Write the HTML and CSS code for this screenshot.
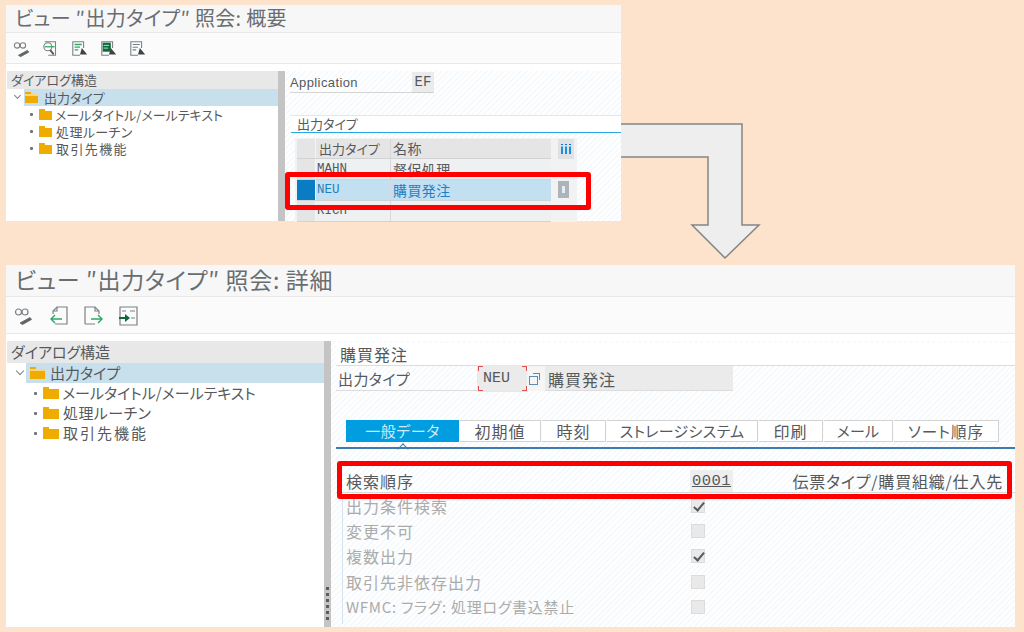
FILE: index.html
```html
<!DOCTYPE html>
<html lang="ja">

<head>
    <meta charset="UTF-8" />
    <title>出力タイプ 照会</title>
    <link rel="stylesheet" href="styles.css">
</head>

<body>
    <!-- 概要 -->
    <div class="window window-small">
        <div class="title">ビュー ″出力タイプ″ 照会: 概要</div>
        <div class="toolbar">
            <svg viewBox="0 0 20 20"><circle cx="4.5" cy="6" r="3" class="ln" /><circle cx="11" cy="6" r="3" class="ln" /><path d="M7.5 6h0.5M6 17l10-5.500 1.500 2-9 5z" class="pen" /></svg>
            <svg viewBox="0 0 20 20"><path d="M3 2h12v15H7" class="ln" /><circle cx="6.500" cy="7.500" r="4.500" class="ln" /><path d="M3 7.500h11" class="gr" /><path d="M9 11l4 5" class="dk" /></svg>
            <svg viewBox="0 0 20 20"><path d="M10 17H2V2h12v7" class="ln" /><path d="M4 5h8M4 8h6M4 11h4" class="gr" /><path d="M12 9l6 7h-8z" class="tri" /></svg>
            <svg viewBox="0 0 20 20"><path d="M10 17H2V2h12v7" class="ln" /><path d="M3 3h9v10H3z" class="blk" /><path d="M4 6h6M4 9h5" class="wh" /><path d="M12 9l6 7h-8z" class="tri" /></svg>
            <svg viewBox="0 0 20 20"><path d="M10 17H2V2h12v7" class="ln" /><path d="M4 5h8M4 8h6M4 11h4" class="ln" /><path d="M12 9l6 7h-8z" class="tri" /></svg>
        </div>
        <div class="split">
            <div class="tree">
                <div class="tree-head">ダイアログ構造</div>
                <div class="tree-row root"><span class="chevron"></span><span class="folder open"></span><span class="root-label">出力タイプ</span></div>
                <div class="tree-row child"><span class="dot"></span><span class="folder"></span>メールタイトル/メールテキスト</div>
                <div class="tree-row child"><span class="dot"></span><span class="folder"></span><span class="kana-gap">処理ルーチン</span></div>
                <div class="tree-row child"><span class="dot"></span><span class="folder"></span><span class="kana-gap kanji">取引先機能</span></div>
            </div>
            <div class="sash"></div>
            <div class="pane">
                <div class="app-row">
                    <span class="app-label">Application</span>
                    <span class="app-value">EF</span>
                </div>
                <div class="group-title">出力タイプ</div>
                <div class="grid-wrap">
                    <div class="grid">
                        <div class="g-row g-head"><span class="g-sel"></span><span class="g-a">出力タイプ</span><span class="g-b">名称</span></div>
                        <div class="g-row"><span class="g-sel"></span><span class="g-a mono">MAHN</span><span class="g-b">督促処理</span></div>
                        <div class="g-row g-active"><span class="g-sel"></span><span class="g-a mono">NEU</span><span class="g-b">購買発注</span></div>
                        <div class="g-row"><span class="g-sel"></span><span class="g-a mono">RICH</span><span class="g-b"></span></div>
                    </div>
                    <div class="grid-side">
                        <div class="grid-config">
                            <svg viewBox="0 0 12 12"><path d="M1 1h2v1H1zM5 1h2v1H5zM9 1h2v1H9z" fill="#0a6ed1" /><path d="M1 3.500h2V11H1zM5 3.500h2V11H5zM9 3.500h2V11H9z" fill="#1d8fd8" /></svg>
                        </div>
                        <div class="grid-knob"><span></span></div>
                    </div>
                </div>
            </div>
        </div>
        <div class="mark mark-one"></div>
    </div>

    <!-- 矢印 -->
    <svg class="arrow" viewBox="0 0 150 150">
        <path d="M1 4H122V105H139L105 138L72 105H88V37H1" fill="#eeeeee" stroke="#858585" stroke-width="1.500" />
    </svg>

    <!-- 詳細 -->
    <div class="window window-large">
        <div class="title">ビュー ″出力タイプ″ 照会: 詳細</div>
        <div class="toolbar">
            <svg viewBox="0 0 20 20"><circle cx="4.500" cy="6" r="3" class="ln" /><circle cx="11" cy="6" r="3" class="ln" /><path d="M7.500 6h0.500M6 17l10-5.500 1.500 2-9 5z" class="pen" /></svg>
            <svg viewBox="0 0 20 20"><path d="M4 8V5l4-4h10v17H6" class="ln" /><path d="M4 5h4V1" class="ln" /><path d="M13 13H2M6 9l-4 4 4 4" class="gr" /></svg>
            <svg viewBox="0 0 20 20"><path d="M2 18V1h10l4 4v3M2 18h10" class="ln" /><path d="M12 1v4h4" class="ln" /><path d="M8 13h11M15 9l4 4-4 4" class="gr" /></svg>
            <svg viewBox="0 0 20 20"><path d="M2 1h17v18H2z" class="ln" /><path d="M4 5h4M12 5h5M13 12h4" class="ln" /><path d="M1 12h7" class="blk-ln" /><path d="M7 8l5 4-5 4z" class="blk" /></svg>
        </div>
        <div class="split">
            <div class="tree">
                <div class="tree-head">ダイアログ構造</div>
                <div class="tree-row root"><span class="chevron"></span><span class="folder open"></span><span class="root-label">出力タイプ</span></div>
                <div class="tree-row child"><span class="dot"></span><span class="folder"></span>メールタイトル/メールテキスト</div>
                <div class="tree-row child"><span class="dot"></span><span class="folder"></span><span class="kana-gap">処理ルーチン</span></div>
                <div class="tree-row child"><span class="dot"></span><span class="folder"></span><span class="kana-gap kanji">取引先機能</span></div>
            </div>
            <div class="sash">
                <span class="sash-dots"></span>
            </div>
            <div class="pane">
                <div class="heading">購買発注</div>
                <div class="key-row">
                    <span class="key-label">出力タイプ</span>
                    <span class="key-field">NEU</span>
                    <span class="key-help"></span>
                    <span class="key-text">購買発注</span>
                </div>
                <div class="tabs">
                    <span class="tab tab-on t1">一般データ</span>
                    <span class="tab t2">初期値</span>
                    <span class="tab t3">時刻</span>
                    <span class="tab t4">ストレージシステム</span>
                    <span class="tab t5">印刷</span>
                    <span class="tab t6">メール</span>
                    <span class="tab t7">ソート順序</span>
                </div>
                <div class="tab-body">
                    <div class="form-row form-main">
                        <span class="form-label">検索順序</span>
                        <span class="form-value">0001</span>
                        <span class="form-note">伝票タイプ/購買組織/仕入先</span>
                    </div>
                    <div class="form-row"><span class="form-label off">出力条件検索</span><span class="check on"></span></div>
                    <div class="form-row"><span class="form-label off">変更不可</span><span class="check"></span></div>
                    <div class="form-row"><span class="form-label off">複数出力</span><span class="check on"></span></div>
                    <div class="form-row"><span class="form-label off">取引先非依存出力</span><span class="check"></span></div>
                    <div class="form-row"><span class="form-label off small">WFMC: フラグ: 処理ログ書込禁止</span><span class="check"></span></div>
                </div>
            </div>
        </div>
        <div class="mark mark-two"></div>
    </div>
</body>

</html>
```

FILE: styles.css
```css
html,
body {
    margin: 0;
    padding: 0;
    width: 1024px;
    height: 632px;
    overflow: hidden;
    background-color: #fde3cb;
    font-family: 'Noto Sans CJK JP', 'Noto Sans', sans-serif;
    font-feature-settings: "palt";
    color: #55595c;
}

/* 画面キャプチャ */
.window {
    position: absolute;
    display: flex;
    flex-direction: column;
    background-color: #ffffff;
    overflow: visible;
}

.window-small {
    left: 6px;
    top: 5px;
    width: 615px;
    height: 216px;
    --title-h: 28px;
    --tool-h: 31px;
    --tree-w: 271px;
    --head-h: 18px;
    --row-h: 17px;
    --tree-font: 13px;
    --kanji-size: 13px;
    --kanji-gap: 1.400px;
}

.window-large {
    left: 6px;
    top: 265px;
    width: 1009px;
    height: 362px;
    --title-h: 32px;
    --tool-h: 37px;
    --tree-w: 317px;
    --head-h: 22px;
    --row-h: 20px;
    --tree-font: 15px;
    --kanji-size: 15px;
    --kanji-gap: 2px;
}

.title {
    height: var(--title-h);
    padding-left: 9px;
    background-color: #f7f7f7;
    border-bottom: 1px solid #e8e8e8;
    box-sizing: border-box;
    white-space: nowrap;
    color: #696d70;
}

.window-small .title {
    font-size: 20px;
    line-height: 26px;
    letter-spacing: 0.300px;
}

.window-large .title {
    font-size: 23px;
    line-height: 28px;
    letter-spacing: 0.650px;
}

.toolbar {
    height: var(--tool-h);
    display: flex;
    align-items: center;
    background-color: #fbfbfb;
    border-bottom: 1px solid #e8e8e8;
    box-sizing: border-box;
    padding: 2px 0 0 7px;
    gap: 11px;
}

.toolbar svg {
    width: 18px;
    height: 18px;
    fill: none;
}

.window-large .toolbar svg {
    width: 20px;
    height: 20px;
}

.window-large .toolbar {
    padding-left: 8px;
    gap: 14.500px;
}

.ln {
    fill: none;
    stroke: #7b8186;
    stroke-width: 1.2;
}

.gr {
    fill: none;
    stroke: #2fa865;
    stroke-width: 1.4;
}

.wh {
    fill: none;
    stroke: #cfe8da;
    stroke-width: 1;
}

.dk {
    fill: none;
    stroke: #555a5e;
    stroke-width: 2;
}

.pen {
    fill: #5c5f62;
    stroke: #6f7579;
}

.tri {
    fill: #3d4347;
}

.blk {
    fill: #0b6b3a;
}

.blk-ln {
    fill: none;
    stroke: #0b6b3a;
    stroke-width: 2;
}

.split {
    flex: 1;
    display: flex;
    min-height: 0;
    margin-top: 7px;
}

/* ツリー */
.tree {
    width: var(--tree-w);
    margin-left: 1px;
    flex-shrink: 0;
    font-size: var(--tree-font);
    color: #55595c;
}

.tree-head {
    height: var(--head-h);
    line-height: var(--head-h);
    padding-left: 4px;
    background-color: #e8e8e8;
    white-space: nowrap;
}

.tree-row {
    height: var(--row-h);
    line-height: var(--row-h);
    display: flex;
    align-items: center;
    white-space: nowrap;
}

.kana-gap {
    margin-left: 1px;
    letter-spacing: 0.400px;
}

.kanji {
    font-size: var(--kanji-size);
    letter-spacing: var(--kanji-gap);
}

.root {
    position: relative;
    padding-left: 18px;
    background: linear-gradient(#c8dfec, #c8dfec) no-repeat 17px 0;
}

.child {
    padding-left: 23px;
}

.window-large .root {
    padding-left: 23px;
    background-position: 19px 0;
}

.window-large .child {
    padding-left: 27px;
}

.root-label {
    margin-left: 3px;
}

.window-large .root-label {
    margin-left: 2px;
}

.chevron {
    position: absolute;
    left: 8px;
    top: 4px;
    width: 4px;
    height: 4px;
    border-right: 1px solid #7b8286;
    border-bottom: 1px solid #7b8286;
    transform: rotate(45deg);
}

.window-large .chevron {
    left: 10px;
    top: 5px;
    width: 5px;
    height: 5px;
}

.dot {
    width: 3px;
    height: 3px;
    margin-right: 6px;
    background-color: #6f7579;
    border-radius: 1px;
}

.folder {
    position: relative;
    width: 13px;
    height: 9px;
    margin-top: 1px;
    margin-right: 3px;
    background-color: #f0ab00;
    flex-shrink: 0;
}

.folder::before {
    content: "";
    position: absolute;
    left: 0;
    top: -2px;
    width: 6px;
    height: 2px;
    background-color: #f0ab00;
}

.window-large .folder {
    width: 16px;
    height: 10px;
}

.window-large .folder.open {
    width: 15px;
}

.folder.open {
    background: linear-gradient(180deg, #f9d67e 0 2px, #f0ab00 2px);
}

.sash {
    position: relative;
    width: 7px;
    flex-shrink: 0;
    background-color: #c4c4c4;
}

.sash-dots {
    position: absolute;
    left: 2px;
    bottom: 7px;
    width: 3px;
    height: 33px;
    background: repeating-linear-gradient(180deg, #5b5e60 0 3px, transparent 3px 6px);
}

/* 右ペイン */
.pane {
    flex: 1;
    min-width: 0;
    background: repeating-linear-gradient(135deg, #ffffff 0 2px, #f7fafc 2px 4px);
}

.app-row {
    display: flex;
    align-items: stretch;
    height: 21px;
    margin: 1px 0 0 5px;
}

.app-label {
    width: 122px;
    font-size: 13px;
    line-height: 21px;
    border-bottom: 1px solid #d5d5d5;
    font-family: 'Liberation Sans', sans-serif;
    letter-spacing: 0.400px;
}

.app-value {
    width: 22px;
    text-align: center;
    line-height: 21px;
    font-size: 14px;
    background-color: #ebebeb;
    border-bottom: 1px solid #cfcfcf;
    font-family: 'Liberation Mono', monospace;
}

.group-title {
    height: 16px;
    line-height: 15px;
    margin: 22px 0 0 6px;
    padding-left: 6px;
    font-size: 13px;
    background-color: #ffffff;
    border-top: 1px solid #e6e6e6;
    border-bottom: 1.500px solid #27a9e8;
}

.grid-wrap {
    display: flex;
    margin: 5px 0 0 10px;
    width: 282px;
    background-color: #f2f2f2;
    padding: 1px 2px 0;
    box-sizing: border-box;
    height: 84px;
    overflow: hidden;
}

.grid {
    width: 254px;
    flex-shrink: 0;
}

.g-row {
    display: flex;
    height: 21px;
    box-sizing: border-box;
    border-bottom: 1px solid #cfd3d6;
    font-size: 13px;
    line-height: 20px;
    background-color: #eef0f2;
}

.g-head {
    background-color: #e5e5e5;
    height: 20px;
    line-height: 19px;
}

.g-sel {
    width: 19px;
    flex-shrink: 0;
    background-color: #e5e5e5;
    border-right: 1px solid #f5f5f5;
    box-sizing: border-box;
}

.g-a {
    width: 75px;
    padding-left: 1px;
    box-sizing: border-box;
    border-right: 1px solid #d8d8d8;
}

.g-head .g-a {
    padding-left: 3px;
}

.g-b {
    flex: 1;
    padding-left: 2px;
    font-size: 14px;
    letter-spacing: 0.400px;
}

.mono {
    font-family: 'Liberation Mono', monospace;
    font-size: 12.500px;
    line-height: 21px;
}

.g-active {
    background-color: #c2e0f2;
    color: #1f7fc0;
}

.g-active .g-sel {
    background-color: #0a7cc4;
}

.grid-side {
    width: 24px;
    margin-left: 4px;
    background-color: #f2f2f2;
}

.grid-config {
    width: 16px;
    height: 20px;
    margin-left: 3px;
    background-color: #dfe2e4;
    display: flex;
    align-items: center;
    justify-content: center;
}

.grid-config svg {
    width: 12px;
    height: 12px;
}

.grid-knob {
    width: 11px;
    height: 17px;
    margin: 22px 0 0 3px;
    background-color: #aab4bd;
    display: flex;
    align-items: center;
    justify-content: center;
}

.grid-knob span {
    width: 3px;
    height: 7px;
    background-color: #e8ecef;
}

/* 詳細 */
.heading {
    height: 22px;
    line-height: 22px;
    margin: 2px 0 0 5px;
    padding-left: 4px;
    font-size: 16px;
    letter-spacing: 1px;
    border-bottom: 1.500px solid #dcdcdc;
    background-color: #ffffff;
}

.key-row {
    display: flex;
    height: 25px;
    margin-left: 5px;
    align-items: stretch;
    font-size: 15px;
    line-height: 26px;
}

.key-label {
    width: 142px;
    padding-left: 2px;
    box-sizing: border-box;
    border-bottom: 1.500px solid #dcdcdc;
    letter-spacing: 0.400px;
}

.key-field {
    position: relative;
    width: 49px;
    box-sizing: border-box;
    padding-left: 5px;
    background-color: #ebebeb;
    font-family: 'Liberation Mono', monospace;
    font-size: 15px;
    outline: 1px solid #e8e8e8;
    background-image:
        linear-gradient(#d9534f, #d9534f), linear-gradient(#d9534f, #d9534f),
        linear-gradient(#d9534f, #d9534f), linear-gradient(#d9534f, #d9534f),
        linear-gradient(#d9534f, #d9534f), linear-gradient(#d9534f, #d9534f),
        linear-gradient(#d9534f, #d9534f), linear-gradient(#d9534f, #d9534f);
    background-repeat: no-repeat;
    background-size: 5px 1px, 1px 5px, 5px 1px, 1px 5px, 5px 1px, 1px 5px, 5px 1px, 1px 5px;
    background-position: 0 0, 0 0, 100% 0, 100% 0, 0 100%, 0 100%, 100% 100%, 100% 100%;
}

.key-help {
    position: relative;
    width: 18px;
    flex-shrink: 0;
    background-color: #f5f5f5;
}

.key-help::before {
    content: "";
    position: absolute;
    left: 2px;
    top: 10px;
    width: 7px;
    height: 7px;
    border: 1px solid #5b8db3;
}

.key-help::after {
    content: "";
    position: absolute;
    left: 6px;
    top: 7px;
    width: 6px;
    height: 6px;
    border-top: 1px solid #7b8286;
    border-right: 1px solid #7b8286;
}

.key-text {
    width: 188px;
    padding-left: 3px;
    box-sizing: border-box;
    background-color: #ebebeb;
    border-bottom: 1px solid #dcdcdc;
    font-size: 16px;
    letter-spacing: 1px;
}

.tabs {
    display: flex;
    height: 22px;
    margin: 29px 0 0 15px;
    font-size: 15px;
    line-height: 20px;
    text-align: center;
    gap: 1px;
    letter-spacing: 0.300px;
}

.tab {
    box-sizing: border-box;
    background-color: #ffffff;
    border: 1.500px solid #d2d2d2;
    border-left-width: 0;
    white-space: nowrap;
}

.t1 { width: 113px; letter-spacing: 0.500px; }
.t2 { width: 81px; font-size: 16px; letter-spacing: 1px; }
.t3 { width: 64px; font-size: 16px; letter-spacing: 1px; }
.t4 { width: 151px; }
.t5 { width: 64px; font-size: 16px; letter-spacing: 1px; }
.t6 { width: 69px; }
.t7 { width: 105px; font-size: 15.500px; letter-spacing: 1px; }

.tab-on {
    position: relative;
    background-color: #009de0;
    color: #cfeaf8;
    border: 0;
    line-height: 22px;
}

.tab-on::after {
    content: "";
    position: absolute;
    left: 53px;
    top: 25px;
    width: 7px;
    height: 7px;
    border-top: 1px solid #3f7cad;
    border-left: 1px solid #3f7cad;
    transform: rotate(45deg);
    background-color: #ffffff;
}

.tab-body {
    margin: 5px 0 0 5px;
    padding-top: 20px;
    border-top: 2px solid #3f7cad;
    position: relative;
    height: 177px;
    box-sizing: border-box;
}

.tab-body::before {
    content: "";
    position: absolute;
    left: 6px;
    top: 50px;
    bottom: 0;
    width: 1px;
    background-color: #d6e4f2;
}

.form-row {
    position: relative;
    display: flex;
    align-items: center;
    height: 25.300px;
    padding-left: 10px;
    font-size: 16px;
    letter-spacing: 1px;
}

.form-main {
    height: 23px;
    border-bottom: 1.500px solid #d8d8d8;
}

.form-label {
    width: 344px;
    flex-shrink: 0;
    white-space: nowrap;
}

.off {
    color: #ababab;
}

.small {
    font-size: 15px;
    letter-spacing: 0.700px;
}

.form-value {
    width: 43px;
    height: 22px;
    text-align: center;
    line-height: 23px;
    background-color: #eeeeee;
    font-family: 'Liberation Mono', monospace;
    font-size: 15.500px;
    letter-spacing: 0.500px;
    text-decoration: underline;
    flex-shrink: 0;
}

.form-note {
    flex: 1;
    text-align: right;
    padding-right: 12px;
    white-space: nowrap;
    letter-spacing: 0.800px;
}

.check {
    width: 14px;
    height: 14px;
    margin-left: 1px;
    background-color: #e9e9e9;
    border: 1px solid #dcdcdc;
    box-sizing: border-box;
    position: relative;
}

.check.on::after {
    content: "";
    position: absolute;
    left: 4px;
    top: 0;
    width: 4px;
    height: 9px;
    border-right: 2px solid #555a5e;
    border-bottom: 2px solid #555a5e;
    transform: rotate(40deg);
}

/* 赤枠・矢印 */
.mark {
    position: absolute;
    border: 5px solid #fe0000;
    border-radius: 3px;
    box-sizing: border-box;
    pointer-events: none;
}

.mark-one {
    left: 279px;
    top: 167px;
    width: 306px;
    height: 38px;
}

.mark-two {
    left: 331px;
    top: 196px;
    width: 675px;
    height: 38px;
}

.arrow {
    position: absolute;
    left: 620px;
    top: 120px;
    width: 150px;
    height: 150px;
}
```
